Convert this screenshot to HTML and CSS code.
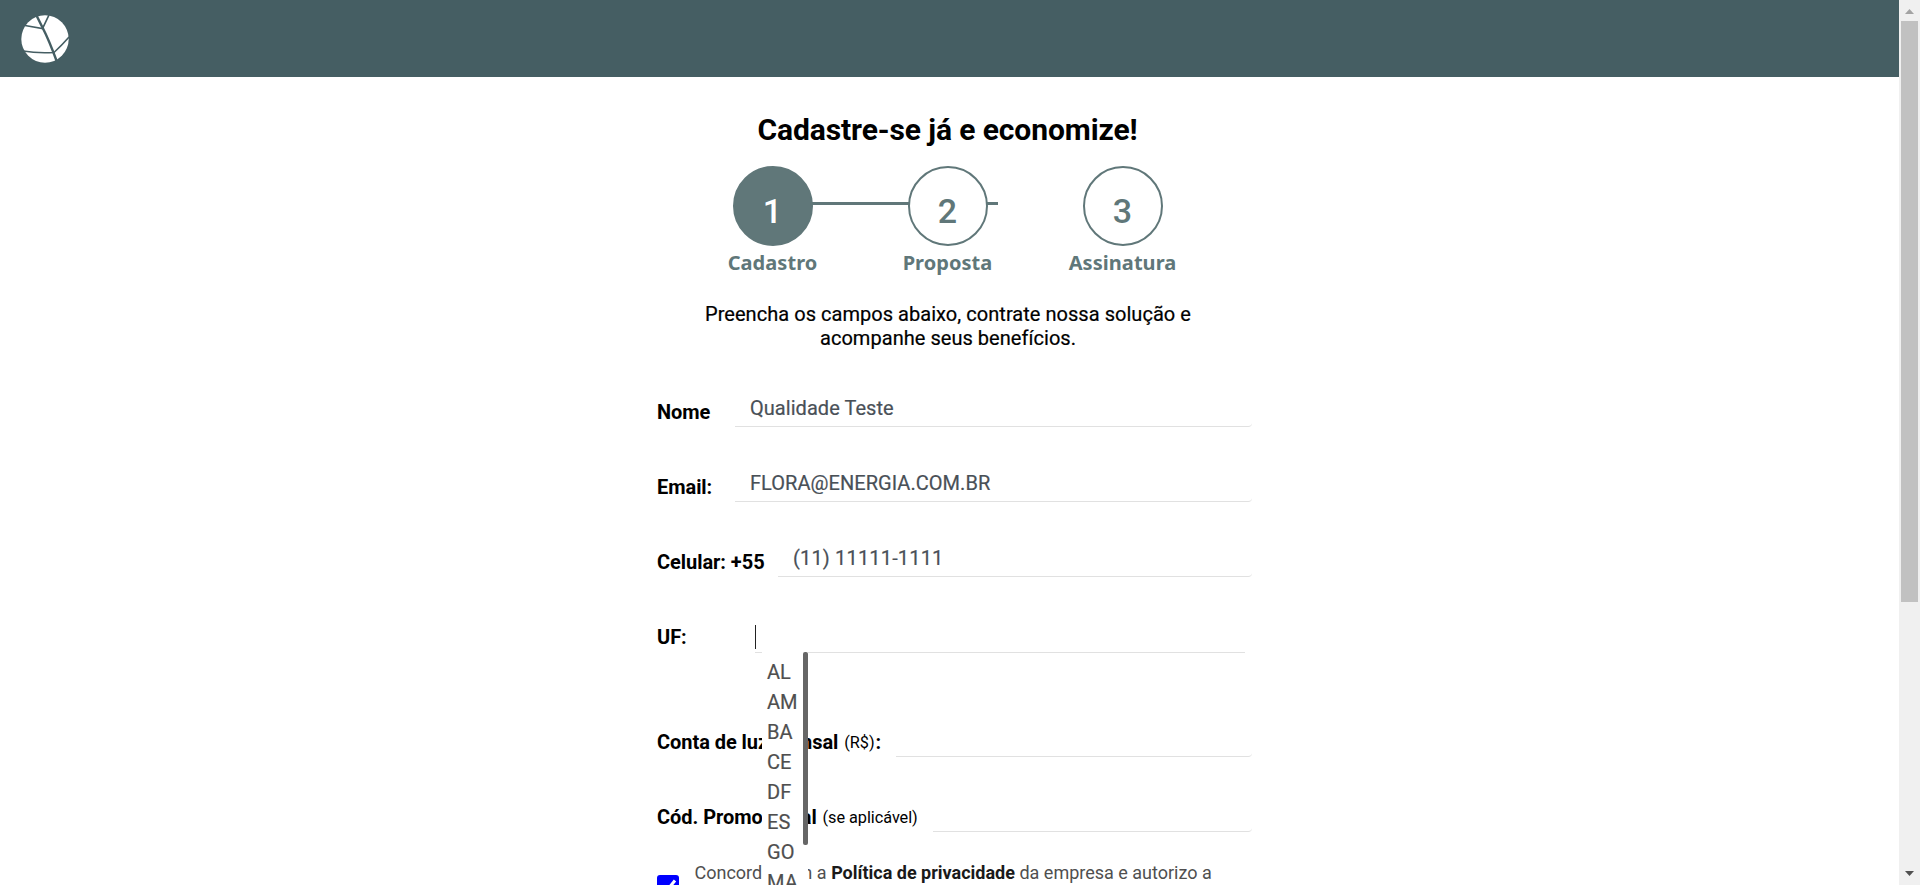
FILE: index.html
```html
<!DOCTYPE html>
<html lang="pt-BR">
<head>
<meta charset="utf-8">
<title>Cadastro</title>
<link rel="stylesheet" href="styles.css">
</head>
<body>
<div class="window">
  <div class="page">
    <header class="topbar">
      <svg class="logo" viewBox="0 0 48 48">
        <circle cx="24" cy="24" r="23.7" fill="#fff"/>
        <g fill="none" stroke="#455e63">
          <path d="M15.500 0.500 L22 13.500 Q28 25 36 47" stroke-width="2.400"/>
          <path d="M4 10.500 L21.500 13.500 L28 0" stroke-width="1.700"/>
          <path d="M2 36 Q16 38.500 33 37.500 Q41 30 48 22" stroke-width="1.500"/>
        </g>
      </svg>
    </header>
    <main class="content">
      <h1 class="title">Cadastre-se já e economize!</h1>
      <ol class="steps">
        <li class="step step-active"><span class="circle">1</span><span class="step-name">Cadastro</span></li>
        <li class="step"><span class="circle">2</span><span class="step-name">Proposta</span></li>
        <li class="step"><span class="circle">3</span><span class="step-name">Assinatura</span></li>
      </ol>
      <p class="intro">Preencha os campos abaixo, contrate nossa solução e<br>acompanhe seus benefícios.</p>
      <form class="form">
        <div class="row"><label class="label short">Nome</label><div class="field">Qualidade Teste</div></div>
        <div class="row"><label class="label short">Email:</label><div class="field">FLORA@ENERGIA.COM.BR</div></div>
        <div class="row"><label class="label phone">Celular: +55</label><div class="field field-phone">(11) 11111-1111</div></div>
        <div class="row row-uf"><label class="label uf">UF:</label>
          <div class="field select"><span class="caret"></span>
            <ul class="menu"><li>AL</li><li>AM</li><li>BA</li><li>CE</li><li>DF</li><li>ES</li><li>GO</li><li>MA</li></ul>
          </div>
        </div>
        <div class="row"><label class="label bill">Conta de luz mensal <small>(R$)</small>:</label><div class="field"></div></div>
        <div class="row"><label class="label promo">Cód. Promocional <small>(se aplicável)</small></label><div class="field"></div></div>
        <div class="consent">
          <span class="check"><svg viewBox="0 0 22 22"><path d="M4 11.500 L9 16.500 L18 5.500" fill="none" stroke="#fff" stroke-width="3"/></svg></span>
          <span class="consent-text">Concordo com a <b>Política de privacidade</b> da empresa e autorizo a</span>
        </div>
      </form>
    </main>
  </div>
  <div class="scrollbar">
    <svg class="arrow" viewBox="0 0 21 21"><path d="M6 14 L10.500 9 L15 14Z" fill="#a3a3a3"/></svg>
    <div class="thumb"></div>
    <svg class="arrow arrow-down" viewBox="0 0 21 21"><path d="M6 7 L10.500 12 L15 7Z" fill="#505050"/></svg>
  </div>
</div>
</body>
</html>
```
FILE: styles.css
```css
* { box-sizing: border-box; }
body { margin: 0; background: #fff; color: #000; font-family: Roboto, sans-serif; font-size: 20px; overflow: hidden; }
.window { display: flex; height: 885px; overflow: hidden; }
.page { flex: 1; overflow: hidden; }
.topbar { height: 77px; background: #455e63; padding: 15px 21px; }
.logo { display: block; width: 48px; height: 48px; }
.content { width: 595px; margin-left: 657px; }
.title { margin: 35px 0 0; width: 581px; height: 36px; line-height: 36px; font-size: 30px; font-weight: 700; letter-spacing: -0.1px; text-align: center; white-space: nowrap; }
.steps { list-style: none; display: flex; width: 525px; margin: 18px 0 0 28px; padding: 0; color: #607779; }
.step { flex: 1; position: relative; display: flex; flex-direction: column; align-items: center; }
.step-active::before { content: ""; position: absolute; left: 127px; top: 36px; width: 186px; height: 3px; background: #607779; }
.circle { position: relative; z-index: 1; width: 80px; height: 80px; border: 2px solid #607779; border-radius: 50%; background: #fff; font-size: 34px; font-weight: 500; line-height: 87px; text-align: center; }
.step-active .circle { background: #607779; color: #fff; }
.step-name { font: 700 20px/28px "Noto Sans", sans-serif; margin-top: 3px; letter-spacing: 0.05px; }
.intro { margin: 25px 0 0; width: 582px; line-height: 24px; letter-spacing: 0.04px; -webkit-text-stroke: 0.2px; text-align: center; white-space: nowrap; }
.form { margin-top: 40px; }
.row { display: flex; height: 37px; margin-bottom: 38px; }
.label { flex: none; padding-top: 10px; line-height: 24px; font-weight: 700; letter-spacing: -0.05px; white-space: nowrap; }
.short { width: 78px; }
.phone { width: 121px; }
.uf { width: 98px; }
.bill { width: 239px; }
.promo { width: 276px; }
.label small { font-size: 16.300px; font-weight: 400; margin: 0 1px; position: relative; top: -1px; }
.field { flex: 1; height: 37px; padding: 6px 15px; line-height: 24px; letter-spacing: 0.04px; -webkit-text-stroke: 0.2px; color: #495057; border-bottom: 1px solid #e1e1e1; border-bottom-right-radius: 4px; }
.field-phone { letter-spacing: 0.17px; }
.row-uf { height: 38px; margin-bottom: 67px; }
.select { position: relative; height: 38px; margin-right: 7px; padding: 10px 0 0; border-radius: 0; }
.caret { display: block; width: 1px; height: 24px; background: #222; }
.menu { position: absolute; z-index: 2; left: 7px; top: 37px; width: 46px; height: 260px; margin: 0; padding: 5px 5px; list-style: none; background: #fff; line-height: 30px; color: #4f4f4f; }
.menu::after { content: ""; position: absolute; right: 0; top: 0; width: 5px; height: 193px; border-radius: 2px; background: #666; }
.consent { display: flex; margin-top: -10px; gap: 16px; }
.check { flex: none; width: 22px; height: 22px; margin-top: 15px; border-radius: 3px; background: #00f; }
.check svg { display: block; }
.consent-text { font-size: 18px; line-height: 24px; margin-top: 1px; margin-left: -0.500px; color: #4f4f4f; white-space: nowrap; }
.consent b { color: #1a1a1a; }
.scrollbar { flex: none; display: flex; flex-direction: column; width: 21px; background: #f0f0f0; }
.arrow { width: 21px; height: 21px; }
.thumb { width: 17px; height: 581px; margin-left: 2px; background: #c1c1c1; }
.arrow-down { margin-top: auto; }
```
